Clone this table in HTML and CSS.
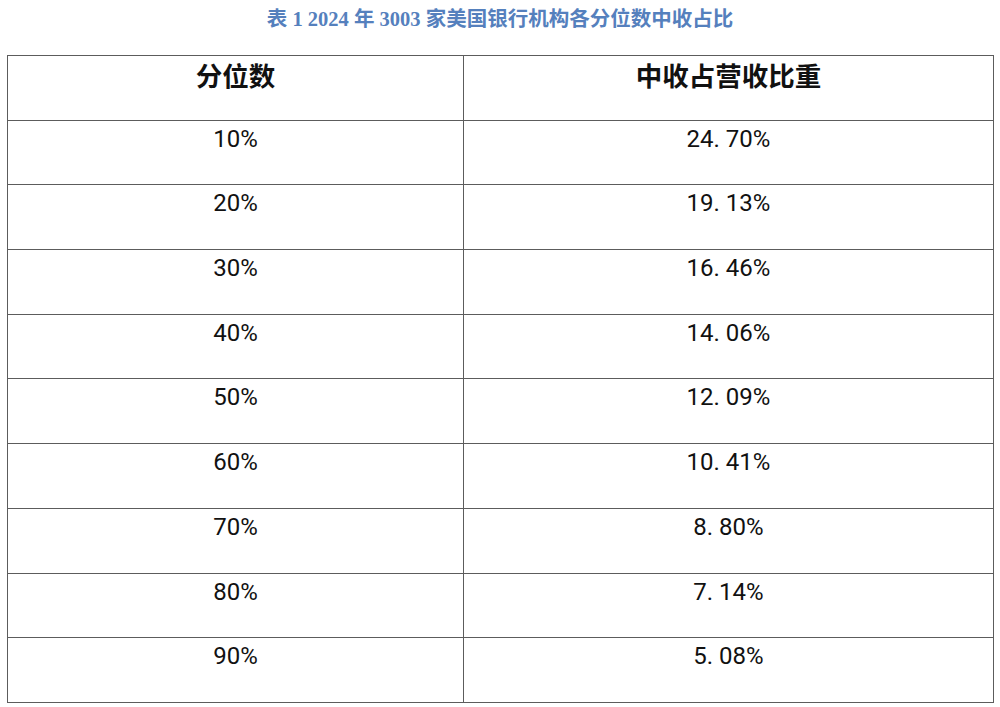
FILE: index.html
```html
<!DOCTYPE html>
<html lang="zh-CN">
<head>
<meta charset="utf-8">
<title>表 1 2024 年 3003 家美国银行机构各分位数中收占比</title>
<link rel="stylesheet" href="styles.css">
</head>
<body>
<h1 class="caption">表 1 2024 年 3003 家美国银行机构各分位数中收占比</h1>
<table class="data">
  <colgroup>
    <col class="col-q">
    <col class="col-r">
  </colgroup>
  <thead>
    <tr><th>分位数</th><th>中收占营收比重</th></tr>
  </thead>
  <tbody>
    <tr><td>10%</td><td>24. 70%</td></tr>
    <tr><td>20%</td><td>19. 13%</td></tr>
    <tr><td>30%</td><td>16. 46%</td></tr>
    <tr><td>40%</td><td>14. 06%</td></tr>
    <tr><td>50%</td><td>12. 09%</td></tr>
    <tr><td>60%</td><td>10. 41%</td></tr>
    <tr><td>70%</td><td>8. 80%</td></tr>
    <tr><td>80%</td><td>7. 14%</td></tr>
    <tr><td>90%</td><td>5. 08%</td></tr>
  </tbody>
</table>
</body>
</html>
```
FILE: styles.css
```css
html, body {
  margin: 0;
  padding: 0;
  background: #ffffff;
}

body {
  width: 1000px;
  height: 707px;
  overflow: hidden;
}

.caption {
  margin: 0;
  height: 55px;
  line-height: 38px;
  text-align: center;
  font-family: "Liberation Serif", "Noto Sans CJK SC", serif;
  font-size: 20.5px;
  font-weight: bold;
  color: #5580bd;
}

.data {
  margin-left: 7px;
  width: 986px;
  border-collapse: collapse;
  table-layout: fixed;
}

.col-q {
  width: 456px;
}

.col-r {
  width: 530px;
}

.data th,
.data td {
  border: 1px solid #5c5c5c;
  height: 64.7px;
  box-sizing: border-box;
  vertical-align: top;
  text-align: center;
  color: #111111;
  padding: 0;
}

.data th {
  font-family: "Noto Sans CJK SC", "Liberation Sans", sans-serif;
  font-size: 26.5px;
  font-weight: bold;
  line-height: 32px;
  padding-top: 3px;
}

.data td {
  font-family: Roboto, "Liberation Sans", sans-serif;
  font-size: 24px;
  font-weight: normal;
  line-height: 28px;
  padding-top: 4px;
}
```
